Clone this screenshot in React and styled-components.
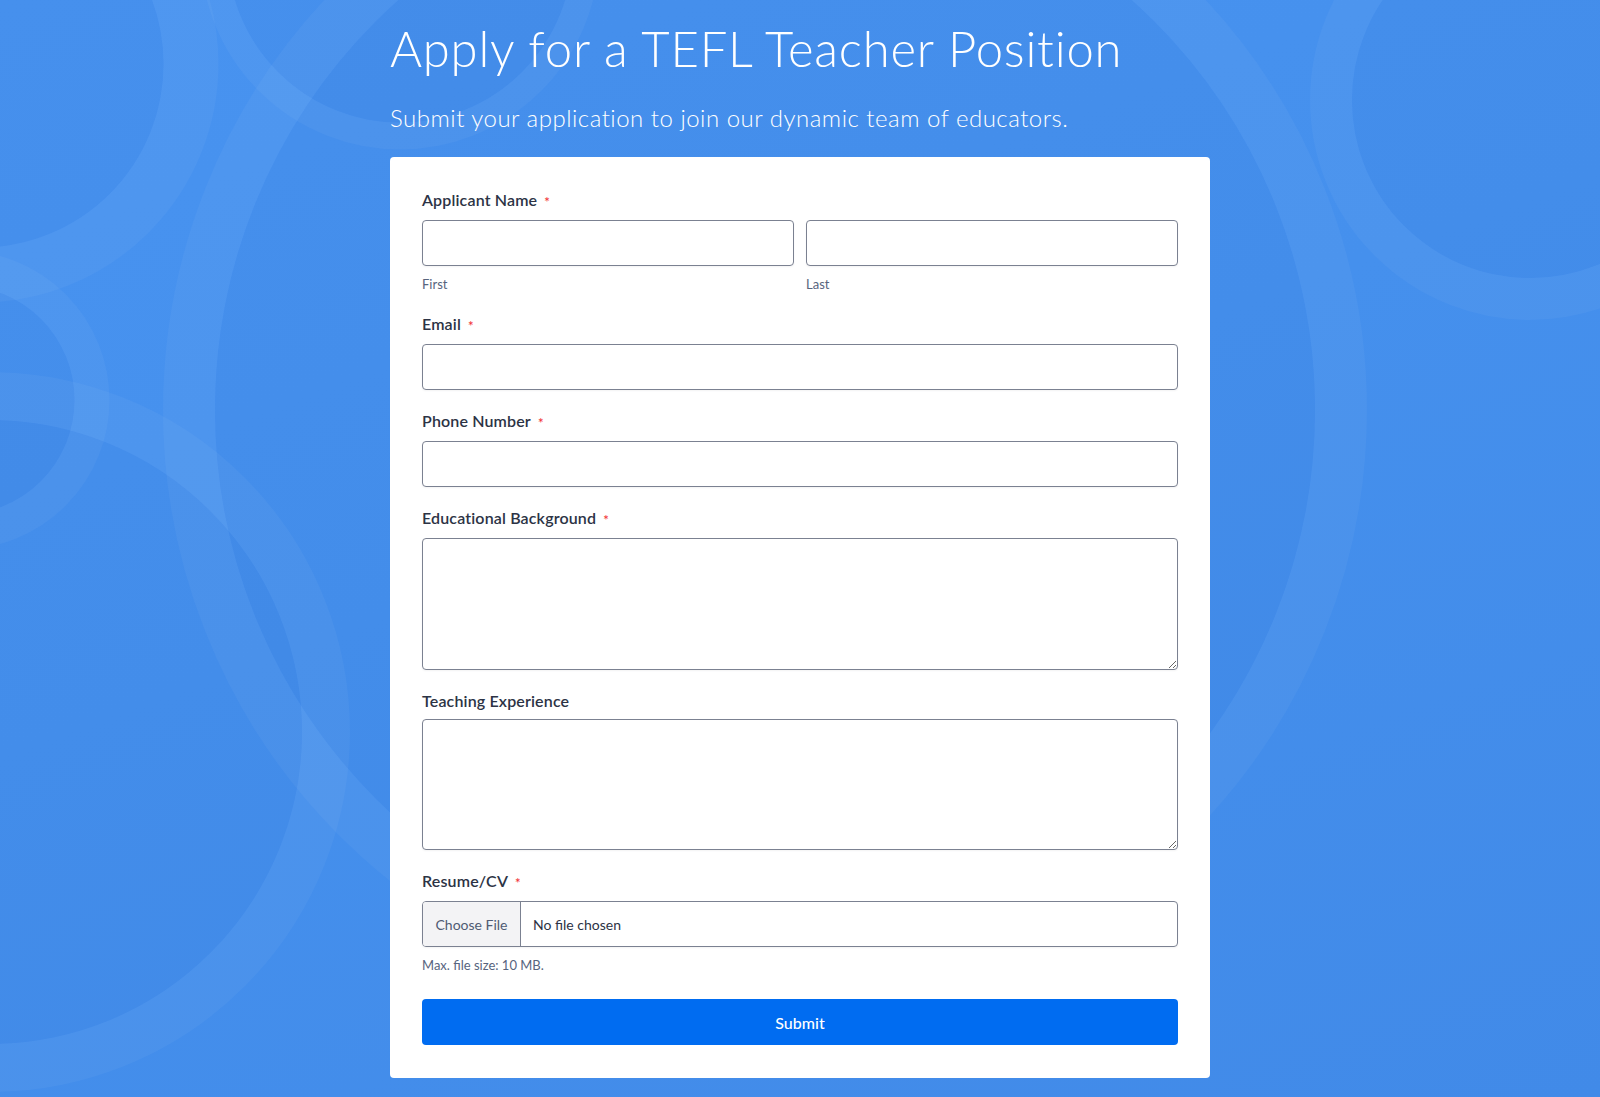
import React from 'react';
import styled, { createGlobalStyle } from 'styled-components';

const GlobalStyle = createGlobalStyle`
  html, body {
    margin: 0;
    padding: 0;
  }
  body {
    font-family: Lato, "Open Sans", "Liberation Sans", sans-serif;
    background: #4590ed;
  }
  * {
    box-sizing: border-box;
  }
`;

const Page = styled.div`
  position: relative;
  min-height: 100vh;
  overflow: hidden;
  background: linear-gradient(160deg, #4893f0 0%, #4590ed 45%, #418ae8 100%);
`;

const Backdrop = styled.svg`
  position: absolute;
  inset: 0;
  width: 100%;
  height: 100%;
  pointer-events: none;
`;

const Content = styled.main`
  position: relative;
  width: 820px;
  margin: 0 auto;
  padding: 19px 0 19px;
`;

const Title = styled.h1`
  margin: 0;
  font-size: 49px;
  line-height: 58px;
  font-weight: 300;
  letter-spacing: 0.8px;
  color: #ffffff;
`;

const Subtitle = styled.p`
  margin: 26px 0 25px;
  font-size: 24px;
  line-height: 29px;
  font-weight: 300;
  letter-spacing: 0.5px;
  color: #ffffff;
`;

const Card = styled.form`
  background: #ffffff;
  border-radius: 4px;
  padding: 33px 32px 33px;
`;

const Field = styled.div`
  margin-bottom: 21px;
`;

const Label = styled.label`
  display: block;
  margin-bottom: 8px;
  font-size: 16px;
  line-height: 20px;
  font-weight: 600;
  letter-spacing: 0.15px;
  color: #2c3345;
`;

const Star = styled.span`
  margin-left: 7px;
  font-size: 13px;
  color: #f23a3c;
  vertical-align: -1px;
`;

const NameRow = styled.div`
  display: grid;
  grid-template-columns: 1fr 1fr;
  gap: 12px;
  margin-top: 3px;
`;

const Input = styled.input`
  display: block;
  width: 100%;
  height: 46px;
  border: 1px solid #7b8191;
  border-radius: 4px;
  background: #ffffff;
  box-shadow: 0 1px 2px rgba(43, 53, 69, 0.06);
  font: inherit;
  padding: 0 12px;
`;

const TextArea = styled.textarea`
  display: block;
  width: 100%;
  height: ${(p) => p.$h}px;
  border: 1px solid #7b8191;
  border-radius: 4px;
  background: #ffffff;
  box-shadow: 0 1px 2px rgba(43, 53, 69, 0.06);
  font: inherit;
  padding: 10px 12px;
`;

const SubLabel = styled.span`
  display: block;
  margin-top: 10px;
  font-size: 13px;
  line-height: ${(p) => p.$lh || 16}px;
  color: #57647e;
`;

const FileBox = styled.div`
  display: flex;
  align-items: center;
  height: 46px;
  margin-top: 1px;
  border: 1px solid #7b8191;
  border-radius: 4px;
  overflow: hidden;
  box-shadow: 0 1px 2px rgba(43, 53, 69, 0.06);
`;

const ChooseButton = styled.span`
  display: flex;
  align-items: center;
  justify-content: center;
  width: 98px;
  height: 100%;
  background: #f3f3f5;
  border-right: 1px solid #7b8191;
  font-size: 14px;
  color: #4f5b73;
`;

const NoFile = styled.span`
  padding-left: 12px;
  padding-top: 1px;
  font-size: 14px;
  color: #2c3345;
`;

const SubmitButton = styled.button`
  display: block;
  width: 100%;
  height: 46px;
  margin-top: 26px;
  border: none;
  border-radius: 4px;
  background: #006cf1;
  color: #ffffff;
  font-family: inherit;
  font-size: 16px;
  font-weight: 500;
`;

const rings = [
  { cx: -20, cy: 64, r: 211, w: 55 },
  { cx: 400, cy: -50, r: 186, w: 27 },
  { cx: 765, cy: 410, r: 576, w: 52 },
  { cx: 1530, cy: 100, r: 199, w: 42 },
  { cx: -40, cy: 400, r: 132, w: 35 },
  { cx: -10, cy: 732, r: 336, w: 48 },
];

const Rings = () => (
  <Backdrop viewBox="0 0 1600 1097" preserveAspectRatio="xMidYMin slice">
    {rings.map((c, i) => (
      <g key={i}>
        <circle cx={c.cx} cy={c.cy} r={c.r - c.w / 2} fill="rgba(20, 60, 140, 0.025)" />
        <circle
          cx={c.cx}
          cy={c.cy}
          r={c.r}
          fill="none"
          stroke="rgba(255, 255, 255, 0.04)"
          strokeWidth={c.w}
        />
      </g>
    ))}
  </Backdrop>
);

const RequiredLabel = ({ children }) => (
  <Label>
    {children}
    <Star>*</Star>
  </Label>
);

const App = () => {
  return (
    <>
      <GlobalStyle />
      <Page>
        <Rings />
        <Content>
          <Title>Apply for a TEFL Teacher Position</Title>
          <Subtitle>Submit your application to join our dynamic team of educators.</Subtitle>
          <Card onSubmit={(e) => e.preventDefault()}>
            <Field>
              <RequiredLabel>Applicant Name</RequiredLabel>
              <NameRow>
                <div>
                  <Input type="text" />
                  <SubLabel $lh={17}>First</SubLabel>
                </div>
                <div>
                  <Input type="text" />
                  <SubLabel $lh={17}>Last</SubLabel>
                </div>
              </NameRow>
            </Field>
            <Field>
              <RequiredLabel>Email</RequiredLabel>
              <Input type="email" />
            </Field>
            <Field>
              <RequiredLabel>Phone Number</RequiredLabel>
              <Input type="tel" />
            </Field>
            <Field>
              <RequiredLabel>Educational Background</RequiredLabel>
              <TextArea $h={132} />
            </Field>
            <Field>
              <Label>Teaching Experience</Label>
              <TextArea $h={131} />
            </Field>
            <div>
              <RequiredLabel>Resume/CV</RequiredLabel>
              <FileBox>
                <ChooseButton>Choose File</ChooseButton>
                <NoFile>No file chosen</NoFile>
              </FileBox>
              <SubLabel>Max. file size: 10 MB.</SubLabel>
            </div>
            <SubmitButton type="submit">Submit</SubmitButton>
          </Card>
        </Content>
      </Page>
    </>
  );
};

export default App;
